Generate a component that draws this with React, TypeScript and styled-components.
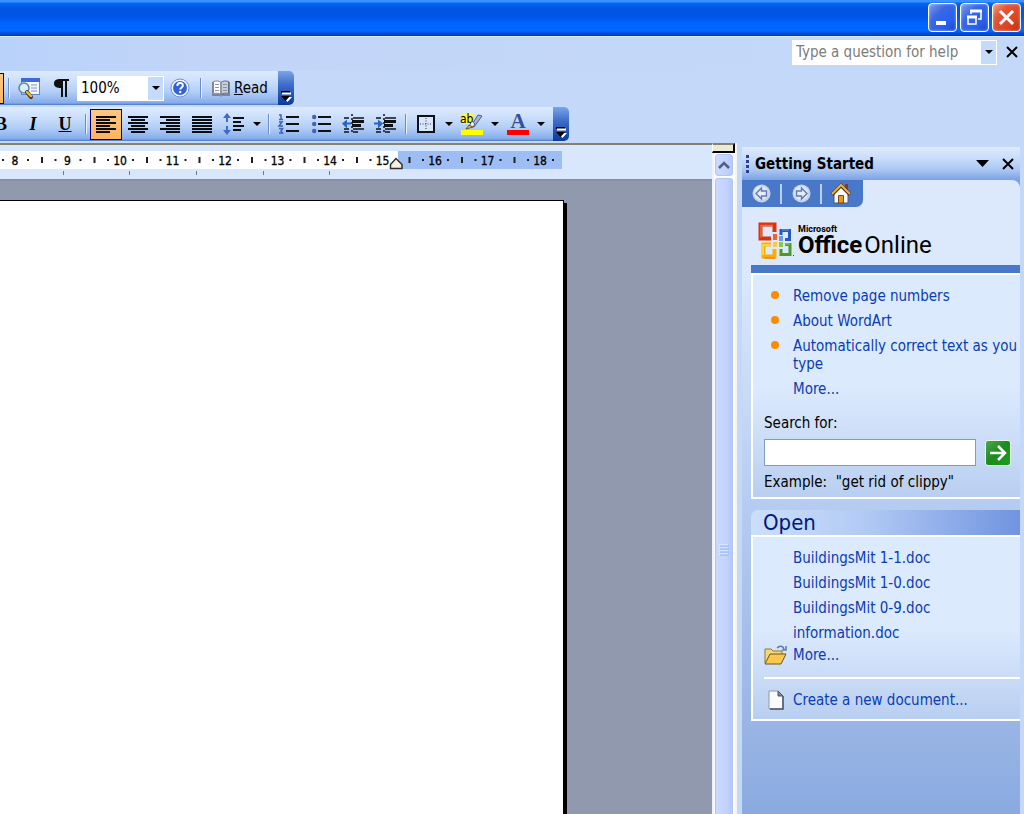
import React from "react";
import styled, { createGlobalStyle, css } from "styled-components";

const ui = `Tahoma, "DejaVu Sans Condensed", "Noto Sans", sans-serif`;

const Global = createGlobalStyle`
  *, *::before, *::after { box-sizing: border-box; }
  body { margin: 0; font-family: ${ui}; font-size: 15px; color: #000; }
  button, input, select { font: inherit; color: inherit; margin: 0; padding: 0; border: 0; border-radius: 0; background: none; }
  ul { list-style: none; margin: 0; padding: 0; }
  svg { display: block; flex: none; overflow: visible; }
`;

const Window = styled.div`
  display: flex;
  flex-direction: column;
  min-height: 100vh;
  overflow: hidden;
  background: #c4d9f9;
`;

/* ---------- title bar ---------- */
const TitleBar = styled.header`
  display: flex;
  justify-content: flex-end;
  gap: 3px;
  height: 36px;
  padding: 3px 3px 0 0;
  background: linear-gradient(#3a92ff 0, #3a92ff 2px, #0468f4 3px, #0054e3 8px, #0055e6 16px, #0066ff 24px, #0066ff 31px, #0050e0 33px, #0038c0 36px);
`;

const CaptionButton = styled.button<{ $close?: boolean }>`
  display: flex;
  align-items: center;
  justify-content: center;
  width: 29px;
  height: 29px;
  border: 1px solid #fff;
  border-radius: 4px;
  box-shadow: inset 0 0 2px 1px rgba(255, 255, 255, 0.25);
  background: ${(p) =>
    p.$close
      ? "linear-gradient(135deg, #f0a088 0, #e2583a 30%, #da4420 70%, #b83010 100%)"
      : "linear-gradient(135deg, #7d9df0 0, #3a68e4 35%, #2a60ee 70%, #1848c8 100%)"};
`;

/* ---------- menu and tool bars ---------- */
const MenuBar = styled.div`
  display: flex;
  align-items: center;
  justify-content: flex-end;
  gap: 7px;
  height: 35px;
  padding: 0 5px 4px 0;
  border-top: 1px solid #dde9fc;
  background: linear-gradient(90deg, #b9d2fa, #c2d5f8 20%, #c4d9f9);
`;

const Combo = styled.div<{ $width: number }>`
  position: relative;
  display: flex;
  width: ${(p) => p.$width}px;
  height: 25px;
  padding: 1px;
  background: #fff;
`;

const ComboInput = styled.input`
  flex: 1;
  min-width: 0;
  padding-left: 3px;
  outline: none;
  &::placeholder { color: #7c7c7c; opacity: 1; }
`;

const ComboSelect = styled.select`
  flex: 1;
  appearance: none;
  padding-left: 3px;
  outline: none;
`;

const dropFace = css`
  display: flex;
  align-items: center;
  justify-content: center;
  width: 15px;
  background: #c4dbf9;
`;

const ComboButton = styled.button`${dropFace}`;

const ComboArrow = styled.span`
  ${dropFace}
  position: absolute;
  top: 1px;
  right: 1px;
  bottom: 1px;
  pointer-events: none;
`;

const PlainButton = styled.button`
  display: flex;
  align-items: center;
  justify-content: center;
  width: 15px;
  height: 21px;
`;

const ToolRow = styled.div`
  display: flex;
  height: 36px;
`;

const ToolStrip = styled.div<{ $pull: number; $end?: number }>`
  display: flex;
  align-items: center;
  height: 34px;
  margin-left: -${(p) => p.$pull}px;
  padding-right: ${(p) => p.$end ?? 0}px;
  background: linear-gradient(#dceafd 0, #cfe1fb 25%, #b3cff6 60%, #85aceb 94%, #4a74c4 100%);
`;

const ToolButton = styled.button<{ $on?: boolean }>`
  display: flex;
  align-items: center;
  justify-content: center;
  width: 32px;
  height: 31px;
  ${(p) =>
    p.$on &&
    css`
      border: 1px solid #000080;
      background: linear-gradient(#fdc985, #fdb35c);
    `}
`;

const Letter = styled.span<{ $italic?: boolean; $under?: boolean }>`
  font: bold 18px "Liberation Serif", serif;
  font-style: ${(p) => (p.$italic ? "italic" : "normal")};
  text-decoration: ${(p) => (p.$under ? "underline" : "none")};
`;

const ArrowButton = styled.button`
  display: flex;
  align-items: center;
  justify-content: center;
  width: 14px;
  height: 31px;
`;

const Divider = styled.span`
  width: 2px;
  height: 20px;
  margin: 0 3px 0 4px;
  border-left: 1px solid #6a8ccb;
  border-right: 1px solid #e8f2ff;
`;

const ReadButton = styled.button`
  display: flex;
  align-items: center;
  gap: 4px;
  width: 73px;
  height: 31px;
  padding-left: 7px;
`;

const Overflow = styled.button`
  display: flex;
  align-items: flex-end;
  justify-content: center;
  width: 16px;
  height: 34px;
  padding-bottom: 2px;
  border-radius: 0 5px 5px 0;
  background: linear-gradient(#7aa4ea, #3f6ec8 40%, #0a3a9c);
`;

/* ---------- work area ---------- */
const Work = styled.main`
  display: flex;
  flex: 1;
`;

const Editor = styled.section`
  display: flex;
  flex-direction: column;
  flex: 1;
  min-width: 0;
  border-top: 2px solid #85826f;
`;

const RulerBar = styled.div`
  height: 34px;
  padding-top: 6px;
  background: #d8e7fc;
`;

const Desk = styled.div`
  display: flex;
  flex: 1;
  padding-top: 21px;
  background: linear-gradient(#808aa8, #9099ae 3px);
`;

const Paper = styled.div`
  width: 79.2%;
  background: #fff;
  border-top: 1px solid #000;
  border-right: 1px solid #000;
  box-shadow: 3px 3px 0 #000;
`;

const Scroll = styled.div`
  display: flex;
  flex-direction: column;
  width: 25px;
  border-left: 2px solid #eef1fa;
  border-right: 2px solid #f6f5ec;
  background: #fbfcff;
`;

const SplitBox = styled.div`
  height: 10px;
  margin: 0 0 1px -2px;
  border: 1px solid #fff;
  border-top: 2px solid #85826f;
  border-right: 2px solid #000;
  border-bottom: 2px solid #000;
  background: #ece9d8;
`;

const scrollFace = css`
  display: flex;
  align-items: center;
  justify-content: center;
  margin: 0 2px 2px 1px;
  border: 1px solid #b0c5f4;
  border-radius: 3px;
  background: linear-gradient(90deg, #cbd9fd, #c3d3fd 60%, #b4cafb);
`;

const ScrollUp = styled.button`
  ${scrollFace}
  height: 22px;
`;

const Thumb = styled.div`
  ${scrollFace}
  flex: 1;
  margin-bottom: 0;
  padding-top: 106px;
  border-bottom: 0;
  border-radius: 3px 3px 0 0;
`;

/* ---------- task pane ---------- */
const Pane = styled.aside`
  display: flex;
  flex-direction: column;
  width: 278px;
  margin: 4px 4px 0 5px;
  background: linear-gradient(#dce9fd 0, #dce9fd 120px, #b5ccf0 360px, #9ab6e5 570px, #8aaae0 668px);
`;

const PaneHead = styled.div`
  display: flex;
  align-items: center;
  height: 33px;
  padding-left: 3px;
  background: linear-gradient(#dfebfd 0, #c8dcfa 35%, #a9c6f3 70%, #7ba2e4 100%);
`;

const PaneTitle = styled.h2`
  flex: 1;
  margin: 0;
  padding-left: 6px;
  font-size: 15px;
  line-height: 20px;
`;

const HeadButton = styled.button`
  display: flex;
  align-items: center;
  justify-content: center;
  width: 25px;
  height: 24px;
`;

const PaneNavRow = styled.div`
  background: #7ba2e4;
`;

const PaneNavFill = styled.div`
  height: 28px;
  border-top-right-radius: 8px;
  background: #dce9fd;
`;

const PaneNav = styled.nav`
  display: flex;
  align-items: center;
  height: 27px;
  width: 121px;
  border-bottom-right-radius: 7px;
  background: #4a78c8;
`;

const NavButton = styled.button`
  display: flex;
  align-items: center;
  justify-content: center;
  width: 38px;
  height: 26px;
`;

const NavRule = styled.span`
  width: 2px;
  height: 20px;
  background: #b8d0f4;
`;

const PaneBody = styled.div`
  display: flex;
  flex-direction: column;
  padding-left: 9px;
`;

const Brand = styled.div`
  display: flex;
  align-items: center;
  gap: 3px;
  height: 57px;
  padding: 6px 0 0 6px;
`;

const BrandText = styled.div`
  display: flex;
  flex-direction: column;
  padding-top: 3px;
  font-family: Roboto, sans-serif;
`;

const BrandSmall = styled.span`
  font-size: 9px;
  font-weight: bold;
  line-height: 8px;
`;

const BrandBig = styled.span`
  font-size: 24px;
  line-height: 24px;
  b { margin-right: 2px; }
`;

const Bar = styled.div`
  height: 8px;
  background: #4a78c8;
`;

const Card = styled.section<{ $min: number }>`
  min-height: ${(p) => p.$min}px;
  padding: 12px 0 0 11px;
  border: 2px solid #fff;
  border-right: 0;
  background: linear-gradient(#dceafe 0, #dceafe 50%, #b9cff0 100%);
`;

const CardHead = styled.h3`
  margin: 11px 0 0;
  padding-left: 12px;
  border-top-left-radius: 7px;
  background: linear-gradient(90deg, #cbdffa 0, #b4ccf5 40%, #7094e0 100%);
  color: #00187c;
  font-size: 22px;
  font-weight: normal;
  line-height: 25px;
`;

const Items = styled.ul`
  display: flex;
  flex-direction: column;
  gap: 7px;
`;

const Item = styled.li`
  display: grid;
  grid-template-columns: 29px 1fr;
  line-height: 18px;
`;

const Dot = styled.span`
  width: 8px;
  height: 8px;
  margin: 4px 0 0 7px;
  border-radius: 4px;
  background: #ff8c00;
`;

const Link = styled.a`
  grid-column: 2;
  color: #0a3cb4;
  text-decoration: none;
`;

const SearchForm = styled.form`
  display: flex;
  flex-wrap: wrap;
  align-items: center;
  gap: 7px 9px;
  margin-top: 16px;
  label, p { width: 100%; margin: 0; line-height: 18px; white-space: pre; }
`;

const SearchBox = styled.input`
  width: 212px;
  height: 27px;
  padding: 0 4px;
  border: 1px solid #7f9db9;
  background: #fff;
`;

const Go = styled.button`
  display: flex;
  align-items: center;
  justify-content: center;
  width: 26px;
  height: 26px;
  border: 1px solid #e8f4e8;
  border-radius: 3px;
  background: linear-gradient(135deg, #4aa84a, #1d8a1d 50%, #14a414);
`;

const ActionRow = styled.div`
  display: grid;
  grid-template-columns: 29px 1fr;
  align-items: center;
  height: 22px;
  margin-top: 2px;
`;

const PageSlot = styled.span`
  padding-left: 4px;
`;

const Rule = styled.hr`
  height: 2px;
  margin: 11px 0 10px;
  border: 0;
  background: #fff;
`;

/* ---------- drawings ---------- */
const Down = ({ w = 9, h = 5, color = "#000" }: { w?: number; h?: number; color?: string }) => (
  <svg width={w} height={h} viewBox="0 0 10 5" preserveAspectRatio="none"><path d="M0 0h10L5 5z" fill={color} /></svg>
);

const Cross = () => (
  <svg width="12" height="12" viewBox="0 0 12 12"><path d="M1 1l10 10M11 1L1 11" stroke="#000" strokeWidth="2" /></svg>
);

const Chevrons = () => (
  <svg width="12" height="12" viewBox="0 0 12 12">
    <path d="M1 1h9" stroke="#000" strokeWidth="2" />
    <path d="M2 2.500h9" stroke="#fff" strokeWidth="2" />
    <path d="M3 6h9l-4.500 5z" fill="#fff" />
    <path d="M1 5h9l-4.500 5z" fill="#000" />
  </svg>
);

const Lines = ({ rows }: { rows: [number, number][] }) => (
  <svg width="20" height="17" viewBox="0 0 20 17">
    {rows.map(([x, w], i) => <rect key={i} x={x} y={i * 3} width={w} height="2" fill="#0c0c14" />)}
  </svg>
);

const left: [number, number][] = [[0, 20], [0, 14], [0, 20], [0, 14], [0, 20], [0, 14]];
const center: [number, number][] = [[0, 20], [3, 14], [0, 20], [3, 14], [0, 20], [3, 14]];
const right: [number, number][] = [[0, 20], [6, 14], [0, 20], [6, 14], [0, 20], [6, 14]];
const full: [number, number][] = [[0, 20], [0, 20], [0, 20], [0, 20], [0, 20], [0, 20]];

const Preview = () => (
  <svg width="22" height="22" viewBox="0 0 22 22">
    <rect x="3.500" y="1.500" width="18" height="16" fill="#f4f8ff" stroke="#5f86cf" />
    <path d="M3 1h19v4H3z" fill="#3c6cd4" />
    <path d="M13 8h6M13 11h6M13 14h6" stroke="#7a94c8" />
    <circle cx="6" cy="11" r="5" fill="#d4f0fa" stroke="#68809c" strokeWidth="1.500" />
    <path d="M9 15l4 5" stroke="#3c3220" strokeWidth="4" strokeLinecap="round" />
    <path d="M9 15l4 4" stroke="#e8b040" strokeWidth="2.500" strokeLinecap="round" />
  </svg>
);

const Pilcrow = () => (
  <svg width="15" height="18" viewBox="0 0 15 18">
    <path d="M6 0h9v2h-2v16h-2V2H9v16H7V9C3 9 0 8 0 4.500S3 0 6 0z" fill="#101010" />
  </svg>
);

const Help = () => (
  <svg width="20" height="20" viewBox="0 0 20 20">
    <circle cx="10" cy="10" r="9" fill="#f2f7ff" stroke="#7592c6" />
    <circle cx="10" cy="10" r="7" fill="#3264d2" />
    <path d="M7.300 8c0-4 5.600-3.800 5.600-.6 0 2-2.700 2-2.700 4.100" fill="none" stroke="#fff" strokeWidth="1.900" />
    <circle cx="10.200" cy="14" r="1.200" fill="#fff" />
  </svg>
);

const Book = () => (
  <svg width="18" height="17" viewBox="0 0 18 17">
    <path d="M0 2h1v12h7l1 2 1-2h7V2h1v14H10l-1 1-1-1H0z" fill="#7c8698" />
    <path d="M1.500 1.500c3-1 6-.5 7.500 1v12c-2-1.500-5-1.500-7.500-1z" fill="#fff" stroke="#7c8698" />
    <path d="M16.500 1.500c-3-1-6-.5-7.500 1v12c2-1.500 5-1.500 7.500-1z" fill="#c8ced8" stroke="#606a7c" />
    <path d="M3 4.500h4M3 7.500h4M3 10.500h4M11 4.500h4M11 7.500h4M11 10.500h4" stroke="#8a94a6" />
  </svg>
);

const Spacing = () => (
  <svg width="22" height="22" viewBox="0 0 22 22">
    <path d="M4 0l4 5H5v4H3V5H0zM4 22l4-5H5v-4H3v4H0z" fill="#3e6cc8" />
    <path d="M10 5h11M10 9h8M10 13h11M10 17h8" stroke="#101018" strokeWidth="2" />
  </svg>
);

const NumberList = () => (
  <svg width="20" height="20" viewBox="0 0 20 20">
    <path d="M0 1h2v4M0 5.500h4M0 8h3l-3 4h4M0 14.500h3.500L2 17l1.500 2H0" fill="none" stroke="#3e62b8" strokeWidth="1.500" />
    <path d="M7 3h13M7 10h13M7 17h13" stroke="#101018" strokeWidth="2" />
  </svg>
);

const BulletList = () => (
  <svg width="19" height="20" viewBox="0 0 19 20">
    {[3, 10, 17].map((y) => <circle key={y} cx="2.200" cy={y} r="2.200" fill="#3e62b8" />)}
    <path d="M6 3h13M6 10h13M6 17h13" stroke="#101018" strokeWidth="2" />
  </svg>
);

const Indent = ({ out }: { out?: boolean }) => (
  <svg width="22" height="20" viewBox="0 0 22 20">
    <path d="M2 4h5M11 4h11M2 15h5M11 15h11M2 18h5M11 18h5" stroke="#101018" strokeWidth="1.500" />
    <path d="M10 7.500h12M10 11.500h9" stroke="#101018" strokeWidth="3" />
    <path d="M10 0v20" stroke="#101018" strokeWidth="1.500" strokeDasharray="2 2" />
    <path d={out ? "M0 9.500l5-4v3h4v2H5v4z" : "M9 9.500l-5-4v3H0v2h4v4z"} fill="#2c62cc" />
  </svg>
);

const Border = () => (
  <svg width="18" height="18" viewBox="0 0 18 18">
    <rect x="1" y="1" width="16" height="16" fill="#d8e7fc" stroke="#101018" strokeWidth="2" />
    <path d="M9 3v12M3 9h12" stroke="#303848" strokeDasharray="1 1.500" />
  </svg>
);

const Highlight = () => (
  <svg width="24" height="22" viewBox="0 0 24 22">
    <path d="M1 0h12v11H1z" fill="#fff34a" />
    <path d="M1 17h22v5H1z" fill="#ffff00" />
    <text x="0" y="10" fontFamily="DejaVu Sans Condensed, sans-serif" fontSize="12">ab</text>
    <path d="M11 13l7-11 4 1-8 11z" fill="#a4b4d4" stroke="#50607c" />
    <path d="M12 8l-3 5 4 1 2-3z" fill="#e8ecf4" stroke="#50607c" />
    <path d="M9 12l4 2-7 2z" fill="#e8c060" stroke="#705820" />
  </svg>
);

const FontColor = () => (
  <svg width="22" height="22" viewBox="0 0 22 22">
    <text x="11" y="15" textAnchor="middle" fontFamily="Liberation Serif, serif" fontWeight="bold" fontSize="21" fill="#34509a">A</text>
    <path d="M0 17h22v5H0z" fill="#fb0000" />
  </svg>
);

const NavArrow = ({ flip }: { flip?: boolean }) => (
  <svg width="19" height="19" viewBox="0 0 19 19">
    <circle cx="9.500" cy="9.500" r="9" fill="#c9d3e6" />
    <circle cx="9" cy="9" r="7" fill="#e2e8f4" />
    <path d={flip ? "M15 9.500L9.500 4v3h-5v5h5v3z" : "M4 9.500L9.500 4v3h5v5h-5v3z"} fill="#e6ecf8" stroke="#5c7cba" strokeWidth="1.400" />
  </svg>
);

const Home = () => (
  <svg width="20" height="21" viewBox="0 0 20 21">
    <path d="M14 1h3v7h-3z" fill="#a02c28" />
    <path d="M3 10l7-7 7 7v10H3z" fill="#fbfbff" stroke="#505868" />
    <path d="M1 11.500l9-9 9 9" fill="none" stroke="#4a3410" strokeWidth="3.600" />
    <path d="M1 11l9-9 9 9" fill="none" stroke="#eeb040" strokeWidth="2" />
    <path d="M7.500 12.500h5V20h-5z" fill="#e89a20" stroke="#7a4c10" />
  </svg>
);

const OfficeLogo = () => (
  <svg width="38" height="40" viewBox="0 0 38 40">
    <g fill="none">
      <path d="M14 18.500H3.500V4.500h14V12" stroke="#d8330c" strokeWidth="4" />
      <path d="M4 17.500V5.500h12" stroke="#f8683c" strokeWidth="1.500" />
      <path d="M24 15v-4.500h8.500v9H28" stroke="#2458bc" strokeWidth="3" />
      <path d="M25 10h7" stroke="#6c9ce8" />
      <path d="M14 24.500H6.500v12h11V29" stroke="#f8b000" strokeWidth="4" />
      <path d="M6 35V25h8" stroke="#ffe04c" strokeWidth="1.500" />
      <path d="M7 38h11" stroke="#f08418" strokeWidth="1.500" />
      <path d="M28 24.500h5v10h-9V29" stroke="#4c9c24" strokeWidth="3" />
      <path d="M28 24h5" stroke="#a0d868" />
    </g>
    <path d="M16 14h4v6h-4z" fill="#ee6430" />
    <path d="M22 16h4v5h-4z" fill="#6c98e4" />
    <path d="M16 22h4v5h-4z" fill="#fcc83c" />
    <path d="M22 22h4v5h-4z" fill="#8cc450" />
    <path d="M36 35h1v1h-1z" fill="#404040" />
  </svg>
);

const Folder = () => (
  <svg width="23" height="20" viewBox="0 0 23 20">
    <path d="M1 18V4h6l2 2h9v5" fill="#f4d67c" stroke="#8c7838" />
    <path d="M1 19l5-10h16l-5 10z" fill="#fac84c" stroke="#6c5620" />
    <path d="M13 3c3-3 6-2 7 1m2-3v4h-4" fill="none" stroke="#5c7ca0" strokeWidth="1.500" />
  </svg>
);

const Page = () => (
  <svg width="16" height="20" viewBox="0 0 16 20">
    <path d="M1 1h9l5 5v13H1z" fill="#fbfcff" stroke="#8c98b0" />
    <path d="M15 6v13H2" fill="none" stroke="#4c5464" strokeWidth="1.500" />
    <path d="M10 1l5 5h-5z" fill="#7c889c" stroke="#4c5464" />
  </svg>
);

const STEP = 52.5;
const Ruler = () => (
  <svg width="562" height="28" viewBox="0 0 562 28" role="img" aria-label="Horizontal ruler">
    <rect y="0" width="398" height="18" fill="#fff" />
    <rect x="398" y="0" width="164" height="18" fill="#9fbdf5" />
    {Array.from({ length: 11 }, (_, i) => {
      const x = 15 + i * STEP;
      return (
        <g key={i}>
          <text x={x} y="14" textAnchor="middle" fontFamily="DejaVu Sans Condensed, sans-serif" fontSize="12" stroke="#000" strokeWidth="0.300">{i + 8}</text>
          <rect x={x - 13} y="8" width="2" height="2" fill="#202020" />
          <rect x={x + 12} y="8" width="2" height="2" fill="#202020" />
          {i < 10 && <rect x={x + 26} y="6" width="2" height="6" fill="#202020" />}
        </g>
      );
    })}
    {[63, 129, 196, 263, 329].map((x) => <rect key={x} x={x} y="20" width="1" height="4" fill="#70788c" />)}
    <path d="M390.500 17.500v-4l5.500-6 6 6v4z" fill="#f3f0e4" stroke="#303030" strokeWidth="1.500" />
  </svg>
);

const tips = ["Remove page numbers", "About WordArt", "Automatically correct text as you type"];
const recent = ["BuildingsMit 1-1.doc", "BuildingsMit 1-0.doc", "BuildingsMit 0-9.doc", "information.doc"];

export default function App() {
  return (
    <Window>
      <Global />
      <TitleBar>
        <CaptionButton aria-label="Minimize">
          <svg width="19" height="19" viewBox="0 0 19 19"><path d="M3 13h10v4H3z" fill="#fff" /></svg>
        </CaptionButton>
        <CaptionButton aria-label="Restore">
          <svg width="19" height="19" viewBox="0 0 19 19" fill="none" stroke="#fff">
            <path d="M6 6V3h10v8h-3" strokeWidth="1.500" /><path d="M5 3h12" strokeWidth="3" />
            <path d="M3 9h8v7H3z" strokeWidth="1.500" /><path d="M2 9h10" strokeWidth="3" />
          </svg>
        </CaptionButton>
        <CaptionButton $close aria-label="Close">
          <svg width="19" height="19" viewBox="0 0 19 19"><path d="M3 3l13 13M16 3L3 16" stroke="#fff" strokeWidth="3" /></svg>
        </CaptionButton>
      </TitleBar>

      <MenuBar>
        <Combo $width={205}>
          <ComboInput aria-label="Type a question for help" placeholder="Type a question for help" />
          <ComboButton aria-label="Recent questions"><Down w={8} h={4} /></ComboButton>
        </Combo>
        <PlainButton aria-label="Close document"><Cross /></PlainButton>
      </MenuBar>

      <ToolRow>
        <ToolStrip $pull={28}>
          <ToolButton $on aria-label="Drawing" />
          <Divider />
          <ToolButton aria-label="Print preview"><Preview /></ToolButton>
          <ToolButton aria-label="Show formatting marks"><Pilcrow /></ToolButton>
          <Combo $width={87}>
            <ComboSelect aria-label="Zoom" defaultValue="100%"><option>100%</option></ComboSelect>
            <ComboArrow><Down w={8} h={4} /></ComboArrow>
          </Combo>
          <ToolButton aria-label="Help"><Help /></ToolButton>
          <Divider />
          <ReadButton><Book /><span><u>R</u>ead</span></ReadButton>
        </ToolStrip>
        <Overflow aria-label="Toolbar options"><Chevrons /></Overflow>
      </ToolRow>

      <ToolRow>
        <ToolStrip $pull={15} $end={5}>
          <ToolButton aria-label="Bold"><Letter>B</Letter></ToolButton>
          <ToolButton aria-label="Italic"><Letter $italic>I</Letter></ToolButton>
          <ToolButton aria-label="Underline"><Letter $under>U</Letter></ToolButton>
          <Divider />
          <ToolButton $on aria-label="Align left"><Lines rows={left} /></ToolButton>
          <ToolButton aria-label="Center"><Lines rows={center} /></ToolButton>
          <ToolButton aria-label="Align right"><Lines rows={right} /></ToolButton>
          <ToolButton aria-label="Justify"><Lines rows={full} /></ToolButton>
          <ToolButton aria-label="Line spacing"><Spacing /></ToolButton>
          <ArrowButton aria-label="Line spacing options"><Down w={8} h={4} /></ArrowButton>
          <Divider />
          <ToolButton aria-label="Numbering"><NumberList /></ToolButton>
          <ToolButton aria-label="Bullets"><BulletList /></ToolButton>
          <ToolButton aria-label="Decrease indent"><Indent out /></ToolButton>
          <ToolButton aria-label="Increase indent"><Indent /></ToolButton>
          <Divider />
          <ToolButton aria-label="Borders"><Border /></ToolButton>
          <ArrowButton aria-label="Border options"><Down w={8} h={4} /></ArrowButton>
          <ToolButton aria-label="Highlight"><Highlight /></ToolButton>
          <ArrowButton aria-label="Highlight options"><Down w={8} h={4} /></ArrowButton>
          <ToolButton aria-label="Font color"><FontColor /></ToolButton>
          <ArrowButton aria-label="Font color options"><Down w={8} h={4} /></ArrowButton>
        </ToolStrip>
        <Overflow aria-label="Toolbar options"><Chevrons /></Overflow>
      </ToolRow>

      <Work>
        <Editor>
          <RulerBar><Ruler /></RulerBar>
          <Desk><Paper /></Desk>
        </Editor>
        <Scroll>
          <SplitBox />
          <ScrollUp aria-label="Scroll up">
            <svg width="12" height="8" viewBox="0 0 12 8"><path d="M1 7l5-5 5 5" fill="none" stroke="#4d6185" strokeWidth="2.500" /></svg>
          </ScrollUp>
          <Thumb>
            <svg width="10" height="12" viewBox="0 0 10 12">
              <path d="M0 1h9M0 4h9M0 7h9M0 10h9" stroke="#eef4fe" />
              <path d="M1 2h9M1 5h9M1 8h9M1 11h9" stroke="#8cb0f8" />
            </svg>
          </Thumb>
        </Scroll>

        <Pane>
          <PaneHead>
            <svg width="4" height="20" viewBox="0 0 4 20">
              {[0, 5, 10, 15].map((y) => <rect key={y} x="1" y={y + 1} width="3" height="3" fill="#27418c" />)}
            </svg>
            <PaneTitle>Getting Started</PaneTitle>
            <HeadButton aria-label="Other task panes"><Down w={13} h={7} /></HeadButton>
            <HeadButton aria-label="Close pane"><Cross /></HeadButton>
          </PaneHead>
          <PaneNavRow>
            <PaneNavFill>
              <PaneNav aria-label="Task pane">
                <NavButton aria-label="Back"><NavArrow /></NavButton>
                <NavRule />
                <NavButton aria-label="Forward"><NavArrow flip /></NavButton>
                <NavRule />
                <NavButton aria-label="Home"><Home /></NavButton>
              </PaneNav>
            </PaneNavFill>
          </PaneNavRow>
          <PaneBody>
            <Brand>
              <OfficeLogo />
              <BrandText>
                <BrandSmall>Microsoft</BrandSmall>
                <BrandBig><b>Office</b>Online</BrandBig>
              </BrandText>
            </Brand>
            <Bar />
            <Card $min={226}>
              <Items>
                {tips.map((t) => <Item key={t}><Dot /><Link href="#">{t}</Link></Item>)}
                <Item><Link href="#">More...</Link></Item>
              </Items>
              <SearchForm onSubmit={(e) => e.preventDefault()}>
                <label htmlFor="search">Search for:</label>
                <SearchBox id="search" />
                <Go aria-label="Search">
                  <svg width="18" height="16" viewBox="0 0 18 16"><path d="M1 8h15M9 1l7 7-7 7" fill="none" stroke="#fff" strokeWidth="2.500" /></svg>
                </Go>
                <p>{'Example:  "get rid of clippy"'}</p>
              </SearchForm>
            </Card>
            <CardHead>Open</CardHead>
            <Card $min={186}>
              <Items>
                {recent.map((t) => <Item key={t}><Link href="#">{t}</Link></Item>)}
              </Items>
              <ActionRow><Folder /><Link href="#">More...</Link></ActionRow>
              <Rule />
              <ActionRow><PageSlot><Page /></PageSlot><Link href="#">Create a new document...</Link></ActionRow>
            </Card>
          </PaneBody>
        </Pane>
      </Work>
    </Window>
  );
}
